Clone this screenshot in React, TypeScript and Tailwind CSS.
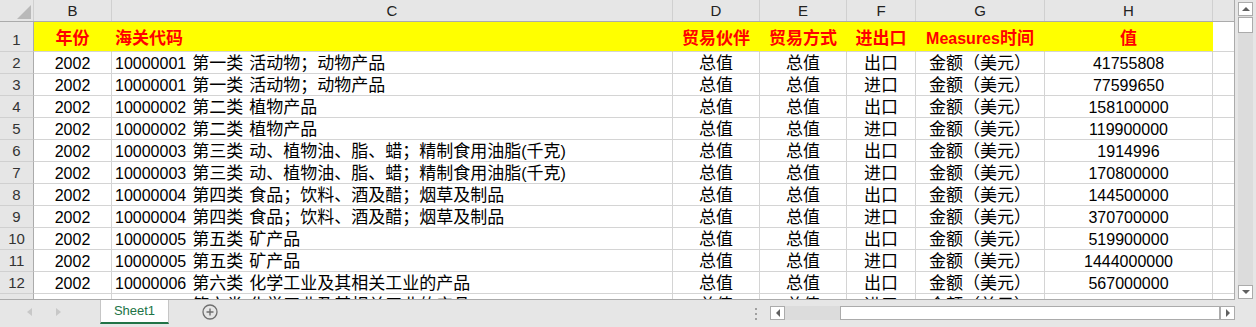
import React from 'react'

const font = "font-['Liberation_Sans','Noto_Sans_CJK_SC',sans-serif]"

// column widths incl. right grid line: B C D E F G H
const colW = ['w-[78px]', 'w-[561px]', 'w-[87px]', 'w-[87px]', 'w-[69px]', 'w-[129px]', 'w-[168px]']
const letters = ['B', 'C', 'D', 'E', 'F', 'G', 'H']
const heads = ['年份', '海关代码', '贸易伙伴', '贸易方式', '进出口', 'Measures时间', '值']

const rows: string[][] = [
  ['2002', '10000001 第一类 活动物；动物产品', '总值', '总值', '出口', '金额（美元）', '41755808'],
  ['2002', '10000001 第一类 活动物；动物产品', '总值', '总值', '进口', '金额（美元）', '77599650'],
  ['2002', '10000002 第二类 植物产品', '总值', '总值', '出口', '金额（美元）', '158100000'],
  ['2002', '10000002 第二类 植物产品', '总值', '总值', '进口', '金额（美元）', '119900000'],
  ['2002', '10000003 第三类 动、植物油、脂、蜡；精制食用油脂(千克)', '总值', '总值', '出口', '金额（美元）', '1914996'],
  ['2002', '10000003 第三类 动、植物油、脂、蜡；精制食用油脂(千克)', '总值', '总值', '进口', '金额（美元）', '170800000'],
  ['2002', '10000004 第四类 食品；饮料、酒及醋；烟草及制品', '总值', '总值', '出口', '金额（美元）', '144500000'],
  ['2002', '10000004 第四类 食品；饮料、酒及醋；烟草及制品', '总值', '总值', '进口', '金额（美元）', '370700000'],
  ['2002', '10000005 第五类 矿产品', '总值', '总值', '出口', '金额（美元）', '519900000'],
  ['2002', '10000005 第五类 矿产品', '总值', '总值', '进口', '金额（美元）', '1444000000'],
  ['2002', '10000006 第六类 化学工业及其相关工业的产品', '总值', '总值', '出口', '金额（美元）', '567000000'],
  ['2002', '10000006 第六类 化学工业及其相关工业的产品', '总值', '总值', '进口', '金额（美元）', ''],
]

// CJK glyphs in the sheet run a touch wider than the latin digits, so size the runs apart
function Mixed({ text }: { text: string }) {
  const parts = text.split(/([\u3000-\u9fff\uff00-\uffef]+| )/).filter(Boolean)
  return (
    <>
      {parts.map((p, i) =>
        p === ' ' ? (
          <span key={i} className="inline-block w-[6px]" />
        ) : /[\u3000-\u9fff\uff00-\uffef]/.test(p) ? (
          <span key={i} className="text-[17px]">
            {p}
          </span>
        ) : (
          <span key={i}>{p}</span>
        )
      )}
    </>
  )
}

function RowHead({ n, tall }: { n: number; tall?: boolean }) {
  return (
    <div
      className={`flex w-[34px] shrink-0 items-center justify-center border-r border-b border-r-[#ababab] border-b-[#d0d0d0] bg-[#e6e6e6] text-[15px] text-[#333] ${
        tall ? 'h-[30px] pt-[8px]' : 'h-[22px] pt-[2px]'
      }`}
    >
      {n}
    </div>
  )
}

function Grid() {
  return (
    <div className="h-[300px] w-[1235px] shrink-0 overflow-hidden border-r border-b border-[#ababab] bg-white">
      {/* column letters */}
      <div className="flex h-[22px] border-b border-[#ababab] bg-[#e6e6e6]">
        <div className="relative w-[34px] shrink-0 border-r border-[#d0d0d0]">
          <svg className="absolute top-[5px] left-[17px]" width="14" height="14" viewBox="0 0 14 14">
            <polygon points="14,0 14,14 0,14" fill="#b9b9b9" />
          </svg>
        </div>
        {letters.map((l, i) => (
          <div
            key={l}
            className={`${colW[i]} flex shrink-0 items-center justify-center border-r border-[#d0d0d0] pt-[2px] text-[15px] text-[#222]`}
          >
            {l}
          </div>
        ))}
        <div className="w-[21px] shrink-0" />
      </div>

      {/* header row */}
      <div className="flex">
        <RowHead n={1} tall />
        {heads.map((h, i) => (
          <div
            key={h}
            className={`${colW[i]} flex h-[30px] shrink-0 items-center border-r border-b border-r-transparent border-b-[#d4d4d4] bg-[#ffff00] pt-[5px] text-[16px] leading-[22px] font-bold text-[#ff0000] ${
              i === 1 ? 'justify-start pl-[3px]' : 'justify-center'
            }`}
          >
            <span>
              <Mixed text={h} />
            </span>
          </div>
        ))}
        <div className="h-[30px] w-[21px] shrink-0 border-b border-[#d4d4d4]" />
      </div>

      {rows.map((r, ri) => (
        <div key={ri} className="flex">
          <RowHead n={ri + 2} />
          {r.map((c, i) => (
            <div
              key={i}
              className={`${colW[i]} flex h-[22px] shrink-0 items-center overflow-hidden whitespace-nowrap border-r border-b border-[#d4d4d4] pt-[2px] text-[16px] leading-[20px] text-black ${
                i === 1 ? 'justify-start pl-[3px]' : 'justify-center'
              }`}
            >
              <span>
                <Mixed text={c} />
              </span>
            </div>
          ))}
          <div className="h-[22px] w-[21px] shrink-0 border-b border-[#d4d4d4]" />
        </div>
      ))}
    </div>
  )
}

function ArrowBtn({ dir }: { dir: 'up' | 'down' | 'left' | 'right' }) {
  const pts = {
    up: '1,5 5,1 9,5',
    down: '1,1 5,5 9,1',
    left: '5,1 1,5 5,9',
    right: '1,1 5,5 1,9',
  }[dir]
  const vertical = dir === 'up' || dir === 'down'
  return (
    <div className="flex h-[14px] w-[15px] shrink-0 items-center justify-center border border-[#ababab] bg-white">
      <svg width={vertical ? 10 : 6} height={vertical ? 6 : 10} viewBox={vertical ? '0 0 10 6' : '0 0 6 10'}>
        <polygon points={pts} fill="#606060" />
      </svg>
    </div>
  )
}

function VScroll() {
  return (
    <div className="flex h-[300px] flex-1 pl-[3px] pr-[3px] pt-[2px]">
      <div className="flex h-[297px] w-[15px] flex-col bg-[#dcdcdc]">
        <ArrowBtn dir="up" />
        <div className="mt-[1px] h-[16px] w-[15px] border border-[#ababab] bg-white" />
        <div className="flex-1" />
        <ArrowBtn dir="down" />
      </div>
    </div>
  )
}

function BottomBar() {
  return (
    <div className="flex h-[27px] items-start bg-[#e6e6e6]">
      <div className="flex h-[24px] w-[100px] shrink-0 items-center">
        <svg className="ml-[27px]" width="5" height="8" viewBox="0 0 5 8">
          <polygon points="5,0 0,4 5,8" fill="#c8c8c8" />
        </svg>
        <svg className="ml-[24px]" width="5" height="8" viewBox="0 0 5 8">
          <polygon points="0,0 5,4 0,8" fill="#c8c8c8" />
        </svg>
      </div>
      <div className="flex h-[24px] w-[69px] shrink-0 items-center justify-center border-x border-b-2 border-x-[#c6c6c6] border-b-[#217346] bg-white pb-[1px] text-[13px] text-[#217346]">
        Sheet1
      </div>
      <div className="ml-[33px] flex h-[24px] items-center">
        <svg width="16" height="16" viewBox="0 0 16 16">
          <circle cx="8" cy="8" r="7" fill="none" stroke="#6f6f6f" strokeWidth="1.3" />
          <path d="M8 4.5v7M4.5 8h7" stroke="#6f6f6f" strokeWidth="1.4" />
        </svg>
      </div>
      <div className="flex-1" />
      <div className="mr-[13px] flex h-[24px] flex-col items-center justify-center gap-[3px] pt-[3px]">
        <div className="h-[2px] w-[2px] bg-[#a0a0a0]" />
        <div className="h-[2px] w-[2px] bg-[#a0a0a0]" />
        <div className="h-[2px] w-[2px] bg-[#a0a0a0]" />
      </div>
      <div className="mt-[6px] flex h-[14px] w-[465px] shrink-0 bg-[#dcdcdc]">
        <ArrowBtn dir="left" />
        <div className="w-[55px]" />
        <div className="h-[14px] flex-1 border border-[#ababab] bg-white" />
        <ArrowBtn dir="right" />
      </div>
      <div className="w-[21px] shrink-0" />
    </div>
  )
}

export default function App() {
  return (
    <div className={`h-[327px] w-[1256px] overflow-hidden bg-[#e6e6e6] ${font}`}>
      <div className="flex">
        <Grid />
        <VScroll />
      </div>
      <BottomBar />
    </div>
  )
}
